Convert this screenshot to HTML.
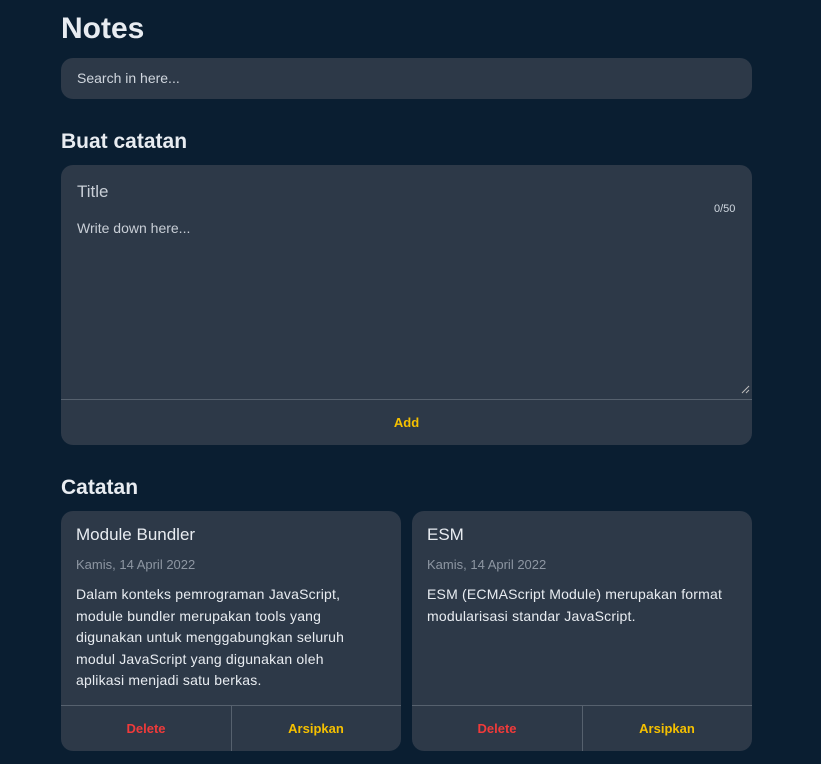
<!DOCTYPE html>
<html><head><style>
*{box-sizing:border-box;margin:0;padding:0}
body{width:821px;height:764px;background:#0a1e31;font-family:"Liberation Sans",sans-serif;color:#e8ecf1;position:relative;overflow:hidden}
.a{position:absolute}
.card{background:#2d3948;border-radius:12px}
h1{font-size:30px;font-weight:bold}
h2{font-size:21px;font-weight:bold}
.sep{background:#56616e}
.btn{font-size:13px;font-weight:bold;text-align:center}
.t{font-size:14px;line-height:21.5px;letter-spacing:0.2px;white-space:nowrap}
</style></head><body>
<h1 class="a" style="left:61px;top:12px">Notes</h1>
<div class="a card" style="left:61px;top:58px;width:691px;height:41px;border-radius:12px"></div>
<div class="a" style="left:77px;top:70px;font-size:14px;color:#d0d6de">Search in here...</div>
<h2 class="a" style="left:61px;top:130px">Buat catatan</h2>
<div class="a card" style="left:61px;top:165px;width:691px;height:280px"></div>
<div class="a" style="left:77px;top:182px;font-size:17px;color:#c8ced6">Title</div>
<div class="a" style="left:714px;top:203px;font-size:11px;color:#d0d8e0">0/50</div>
<div class="a" style="left:77px;top:220px;font-size:14px;color:#c8ced6">Write down here...</div>
<svg class="a" style="left:740px;top:384px" width="10" height="10"><path d="M9 2L2 9M9 6L6 9" stroke="#bbb" stroke-width="1"/></svg>
<div class="a sep" style="left:61px;top:399px;width:691px;height:1px"></div>
<div class="a btn" style="left:61px;top:415px;width:691px;color:#f5c000">Add</div>
<h2 class="a" style="left:61px;top:476px">Catatan</h2>
<div class="a card" style="left:61px;top:511px;width:340px;height:240px"></div>
<div class="a" style="left:76px;top:525px;font-size:17px">Module Bundler</div>
<div class="a" style="left:76px;top:557px;font-size:13px;color:#8d96a2">Kamis, 14 April 2022</div>
<div class="a t" style="left:76px;top:584px">Dalam konteks pemrograman JavaScript,<br>module bundler merupakan tools yang<br>digunakan untuk menggabungkan seluruh<br>modul JavaScript yang digunakan oleh<br>aplikasi menjadi satu berkas.</div>
<div class="a sep" style="left:61px;top:705px;width:340px;height:1px"></div>
<div class="a sep" style="left:231px;top:705px;width:1px;height:46px"></div>
<div class="a btn" style="left:61px;top:721px;width:170px;color:#f03a3a">Delete</div>
<div class="a btn" style="left:231px;top:721px;width:170px;color:#f5c000">Arsipkan</div>
<div class="a card" style="left:412px;top:511px;width:340px;height:240px"></div>
<div class="a" style="left:427px;top:525px;font-size:17px">ESM</div>
<div class="a" style="left:427px;top:557px;font-size:13px;color:#8d96a2">Kamis, 14 April 2022</div>
<div class="a t" style="left:427px;top:584px">ESM (ECMAScript Module) merupakan format<br>modularisasi standar JavaScript.</div>
<div class="a sep" style="left:412px;top:705px;width:340px;height:1px"></div>
<div class="a sep" style="left:582px;top:705px;width:1px;height:46px"></div>
<div class="a btn" style="left:412px;top:721px;width:170px;color:#f03a3a">Delete</div>
<div class="a btn" style="left:582px;top:721px;width:170px;color:#f5c000">Arsipkan</div>
</body></html>
